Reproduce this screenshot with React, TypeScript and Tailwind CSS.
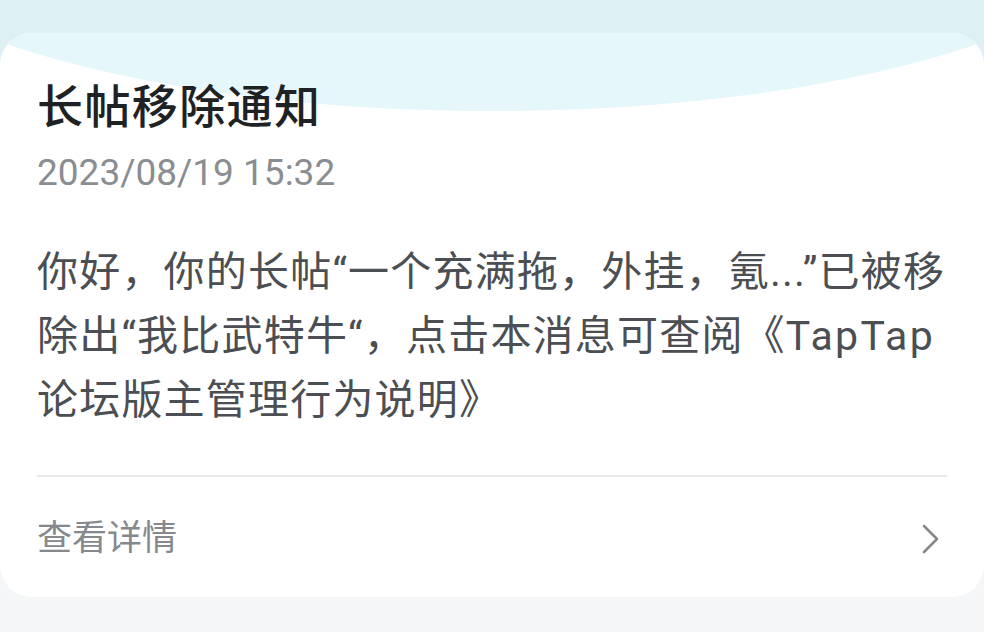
import React from "react";

export default function App() {
  return (
    <div className="w-[984px] h-[632px] overflow-hidden bg-[linear-gradient(#ddf0f4_0px,#ddf0f4_200px,#f4f6f7_200px)] pt-[33px] [font-family:Roboto,'Noto_Sans_CJK_SC',sans-serif]">
      <div className="relative h-[564px] rounded-[32px] bg-white overflow-hidden">
        <div className="absolute left-[-158px] top-[-322px] w-[1300px] h-[400px] rounded-[50%] bg-[#e6f7fb]" />
        <div className="relative px-[37px] pt-[44px]">
          <h1 className="text-[46px] leading-[60px] font-medium tracking-[1.4px] text-[#1f2225]">长帖移除通知</h1>
          <div className="mt-[12px] text-[37px] leading-[48px] text-[#8a8d91]">2023/08/19 15:32</div>
          <p className="mt-[43px] w-[940px] text-[41px] leading-[64px] tracking-[1.2px] text-[#4b4e52]">
            你好，你的长帖“一个充满拖，外挂，氪...”已被移
            <br />
            除出“我比武特牛“，点击本消息可查阅《<span className="tracking-[2.4px]">TapTap</span>
            <br />
            论坛版主管理行为说明》
          </p>
          <div className="mt-[43px] h-[2px] w-[910px] bg-[#e8e9eb]" />
          <div className="flex items-center justify-between w-[910px] h-[124px]">
            <span className="text-[35px] text-[#85888c]">查看详情</span>
            <svg width="20" height="32" viewBox="0 0 20 32" className="mr-[6px]">
              <polyline points="3,3 16,16 3,29" fill="none" stroke="#85888c" strokeWidth="2.6" strokeLinecap="round" strokeLinejoin="round" />
            </svg>
          </div>
        </div>
      </div>
    </div>
  );
}
